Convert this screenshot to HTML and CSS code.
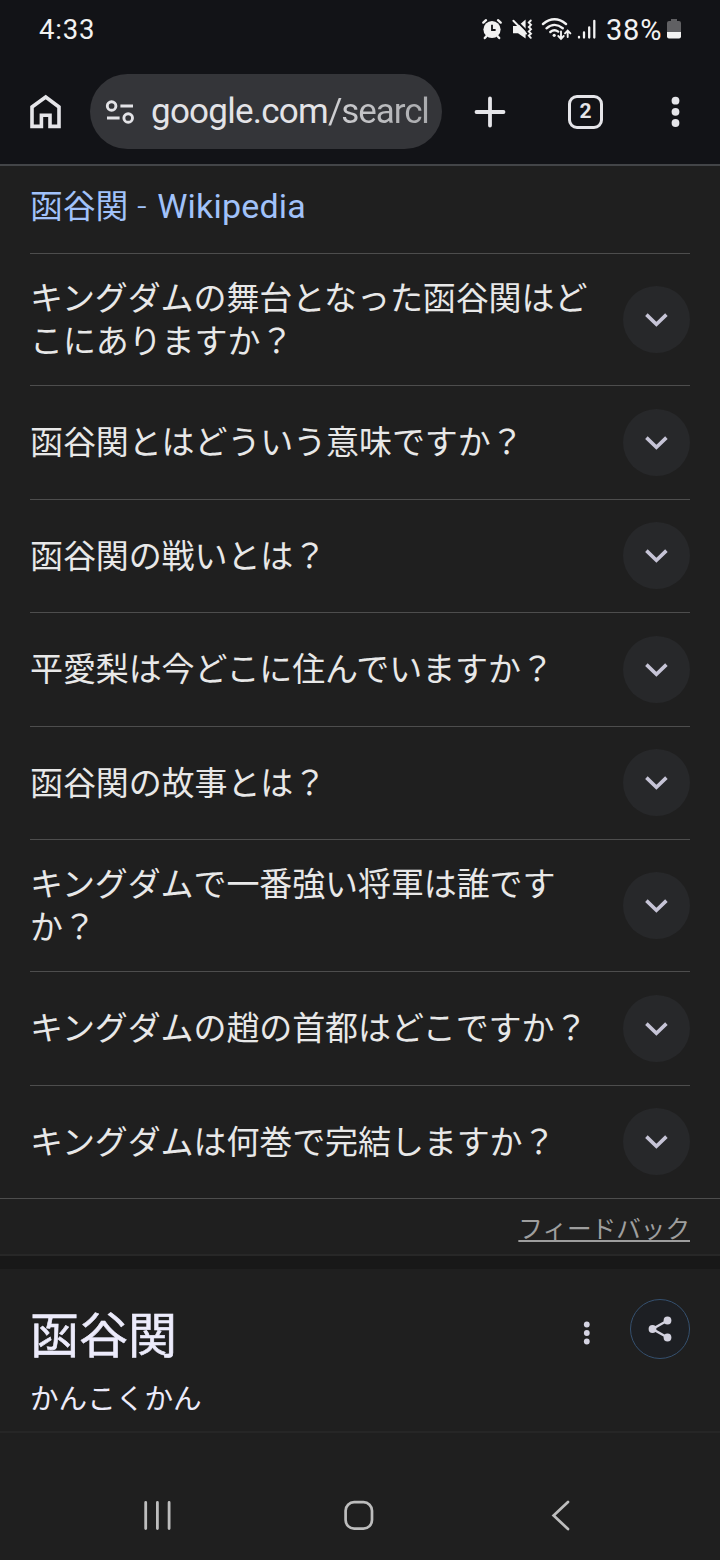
FILE: index.html
```html
<!DOCTYPE html>
<html lang="ja">
<head>
<meta charset="utf-8">
<title>函谷関</title>
<link rel="stylesheet" href="styles.css">
</head>
<body>
<svg class="defs" width="0" height="0">
  <symbol id="chev" viewBox="0 0 24 16"><path d="M1.4 2.6 11.4 12.2 21.4 2.6" fill="none" stroke="currentColor" stroke-width="3.6"/></symbol>
</svg>
<header class="top">
  <div class="status">
    <span class="clock">4:33</span>
    <svg class="sicons" width="120" height="26" viewBox="480 16 120 26" fill="none" stroke="#f2f2f2" stroke-linecap="round">
      <circle cx="492" cy="29.5" r="8.6" fill="#f2f2f2" stroke="none"/>
      <path d="M483.3 22.6 486 20.2M500.7 22.6 498 20.2M486.6 36 484.8 38M497.4 36 499.2 38" stroke-width="2.4"/>
      <path d="M492 24.8V30H495.6" stroke="#121317" stroke-width="1.8" stroke-linecap="butt"/>
      <path d="M513 26H518L525.6 19.6V38.4L518 33.2H513Z" fill="#f2f2f2" stroke="none"/>
      <path d="M515 19.4 529.4 33.8" stroke="#121317" stroke-width="2"/>
      <path d="M513.4 20.8 526 33.6" stroke-width="2"/>
      <path d="M530.8 20.5 528.8 22.6 531 24.8 528.8 27 531 29.2 528.8 31.4 531 33.6 528.8 35.6 530.8 37.8" stroke-width="1.9"/>
      <path d="M543 24Q554.5 14.6 566 24" stroke-width="2.4"/>
      <path d="M546.5 28.3Q554.5 21.5 562.8 28.2" stroke-width="2.4"/>
      <path d="M550.3 32Q554.3 28.8 558.2 31.6" stroke-width="2.4"/>
      <circle cx="554.2" cy="35.3" r="1.6" fill="#f2f2f2" stroke="none"/>
      <path d="M561 31.5V38.4M558.3 36 561 38.8 563.7 36M567.7 37V31M565 33.4 567.7 30.6 570.4 33.4" stroke-width="1.9"/>
      <path d="M579 36.8V37.6M584 32.5V37.6M589.2 27.5V37.6M594.3 20.8V37.6" stroke-width="2.3"/>
    </svg>
    <span class="pct">38%</span>
    <svg class="batt" width="14" height="20" viewBox="0 0 14 20"><path d="M4 0H10V2H12Q14 2 14 4V13H0V4Q0 2 2 2H4Z" fill="#606063"/><path d="M0 13H14V17.5Q14 19.5 12 19.5H2Q0 19.5 0 17.5Z" fill="#f2f2f2"/></svg>
  </div>
  <div class="bar">
    <svg class="home" width="32" height="36" viewBox="0 0 32 36"><path d="M2 32.4V13L15.7 3 29 13V32.4H20V21.2H11.4V32.4Z" fill="none" stroke="#e5e5e9" stroke-width="3.6"/></svg>
    <div class="url">
      <svg width="30" height="26" viewBox="0 0 30 26" fill="none" stroke="#e3e3e7" stroke-width="2.9"><circle cx="6.6" cy="7" r="4.3"/><path d="M15.4 7H28M2 19H14.6"/><circle cx="23.2" cy="19" r="4.3"/></svg>
      <span class="addr">google.com<span class="path">/searcl</span></span>
    </div>
    <svg class="plus" width="32" height="32" viewBox="0 0 32 32"><path d="M16 2.5V29.5M2.5 16H29.5" stroke="#e5e5e9" stroke-width="3.8" stroke-linecap="round"/></svg>
    <div class="tabs">2</div>
    <svg class="more" width="10" height="32" viewBox="0 0 10 32" fill="#e5e5e9"><circle cx="5.5" cy="4.7" r="3.9"/><circle cx="5.5" cy="15.8" r="3.9"/><circle cx="5.5" cy="27" r="3.9"/></svg>
  </div>
</header>
<main>
  <div class="wiki"><a>函谷関<span class="latin"> <span class="dash">-</span> Wikipedia</span></a></div>
  <ul class="questions">
    <li class="q two"><span>キングダムの舞台となった函谷関はど<br>こにありますか？</span><i class="round"><svg><use href="#chev"/></svg></i></li>
    <li class="q"><span>函谷関とはどういう意味ですか？</span><i class="round"><svg><use href="#chev"/></svg></i></li>
    <li class="q"><span>函谷関の戦いとは？</span><i class="round"><svg><use href="#chev"/></svg></i></li>
    <li class="q"><span>平愛梨は今どこに住んでいますか？</span><i class="round"><svg><use href="#chev"/></svg></i></li>
    <li class="q"><span>函谷関の故事とは？</span><i class="round"><svg><use href="#chev"/></svg></i></li>
    <li class="q two"><span>キングダムで一番強い将軍は誰です<br>か？</span><i class="round"><svg><use href="#chev"/></svg></i></li>
    <li class="q"><span>キングダムの趙の首都はどこですか？</span><i class="round"><svg><use href="#chev"/></svg></i></li>
    <li class="q"><span>キングダムは何巻で完結しますか？</span><i class="round"><svg><use href="#chev"/></svg></i></li>
  </ul>
  <div class="feedback"><a>フィードバック</a></div>
  <section class="entity">
    <div class="names"><h1>函谷関</h1><p>かんこくかん</p></div>
    <svg class="dots" width="8" height="26" viewBox="0 0 8 26" fill="#d5d4e2"><circle cx="3.8" cy="4.5" r="2.9"/><circle cx="3.8" cy="13" r="2.9"/><circle cx="3.8" cy="21.5" r="2.9"/></svg>
    <div class="share"><svg width="28" height="28" viewBox="0 0 28 28" fill="#d3d2df"><path d="M21.5 5.5 6.5 14 21.5 22.5" fill="none" stroke="#d3d2df" stroke-width="2.4"/><circle cx="21.5" cy="5.5" r="3.9"/><circle cx="6.5" cy="14" r="3.9"/><circle cx="21.5" cy="22.5" r="3.9"/></svg></div>
  </section>
</main>
<nav class="nav">
  <svg width="30" height="32" viewBox="0 0 30 32"><path d="M3.7 2.5V28.5M15.4 2.5V28.5M27.1 2.5V28.5" stroke="#bdbdbd" stroke-width="2.8" stroke-linecap="round"/></svg>
  <svg width="32" height="32" viewBox="0 0 32 32"><rect x="2.6" y="2.2" width="26.4" height="26.4" rx="8.5" fill="none" stroke="#bdbdbd" stroke-width="2.7"/></svg>
  <svg width="20" height="32" viewBox="0 0 20 32"><path d="M17 2 2.6 15.5 17 29" fill="none" stroke="#bdbdbd" stroke-width="2.7" stroke-linecap="round"/></svg>
</nav>
</body>
</html>
```
FILE: styles.css
```css
* { box-sizing: border-box; }
body {
  margin: 0;
  width: 720px;
  height: 1560px;
  overflow: hidden;
  background: #1f1f1f;
  color: #e8e8e8;
  font-family: "Noto Sans CJK JP", sans-serif;
}
svg { display: block; flex: none; }
.defs { position: absolute; }
.top { height: 166px; background: #121317; border-bottom: 2px solid #434548; }
.status {
  display: flex; align-items: center;
  height: 60px; padding: 0 39px;
  font: 27.5px/60px Roboto, sans-serif; color: #f2f2f2;
}
.clock { width: 441px; letter-spacing: 0.8px; }
.pct { width: 61px; margin-left: 6px; font-size: 29px; letter-spacing: 0.8px; white-space: nowrap; }
.sicons { margin-top: -2px; }
.batt { margin-top: -2px; }
.bar { display: flex; align-items: center; height: 103px; }
.home { margin: 0 15px 0 30px; }
.url {
  display: flex; align-items: center;
  width: 352px; height: 75px; margin: 0 32px 0 13px; padding: 0 12px 0 15px;
  border-radius: 38px; background: #343539;
}
.addr {
  width: 280px; margin-left: 16px; white-space: nowrap;
  font: 35px/48px Roboto, sans-serif; letter-spacing: -0.75px; color: #e3e3e7;
}
.path { letter-spacing: -1.1px; background: linear-gradient(90deg, #d0d0d3, #a9aaad); -webkit-background-clip: text; background-clip: text; color: transparent; }
.tabs {
  width: 35px; height: 34px; margin: 0 67px 0 62px;
  border: 3.6px solid #e5e5e9; border-radius: 9px;
  font: bold 21px/27px Roboto, sans-serif; text-align: center; color: #e5e5e9;
}
.wiki { display: flex; align-items: center; height: 87px; padding: 0 30px 13px; font-size: 32.8px; color: #a1c2fa; }
.latin { font-family: Roboto, sans-serif; font-size: 34px; letter-spacing: 0.2px; }
.dash { font-weight: 300; letter-spacing: 1.8px; }
.questions { list-style: none; margin: 0 30px; padding: 0; }
.q {
  display: flex; align-items: center; justify-content: space-between;
  height: 113.5px; border-top: 1px solid #4d4d4d;
  font-size: 33px; line-height: 43px; letter-spacing: -0.1px; white-space: nowrap;
}
.q span { padding-bottom: 3px; }
.two { height: 132px; }
.round {
  display: grid; place-items: center; flex: none;
  width: 67px; height: 67px; border-radius: 50%;
  background: #27282a; color: #c6c4d6;
}
.round svg { width: 24px; height: 16px; margin-top: 1px; }
.feedback {
  height: 58px; padding-right: 30px; text-align: right;
  border-top: 1px solid #4d4d4d; border-bottom: 2px solid #272727;
  font-size: 24.6px; line-height: 56px; color: #9e9e9e;
}
.feedback a { text-decoration: underline; text-decoration-thickness: 2px; text-underline-offset: 2px; }
.entity {
  display: flex; align-items: flex-start;
  height: 177px; padding: 28px 30px 0;
  border-top: 13px solid #181818; border-bottom: 2px solid #262626;
  color: #ecebfb;
}
.names { width: 553px; }
h1 { margin: 0; font-size: 49px; line-height: 70px; font-weight: 400; -webkit-text-stroke: 0.6px #ecebfb; }
p { margin: 9px 0 0; font-size: 28.6px; line-height: 42px; }
.dots { margin: 23px 39px 0 0; }
.share { display: grid; place-items: center; width: 60px; height: 60px; margin-top: 2px; border: 1px solid #35506f; border-radius: 50%; background: #1d1f23; }
.nav { display: flex; padding: 67px 0 0 142px; }
.nav svg:nth-child(2) { margin: 0 176px 0 171px; }
```
